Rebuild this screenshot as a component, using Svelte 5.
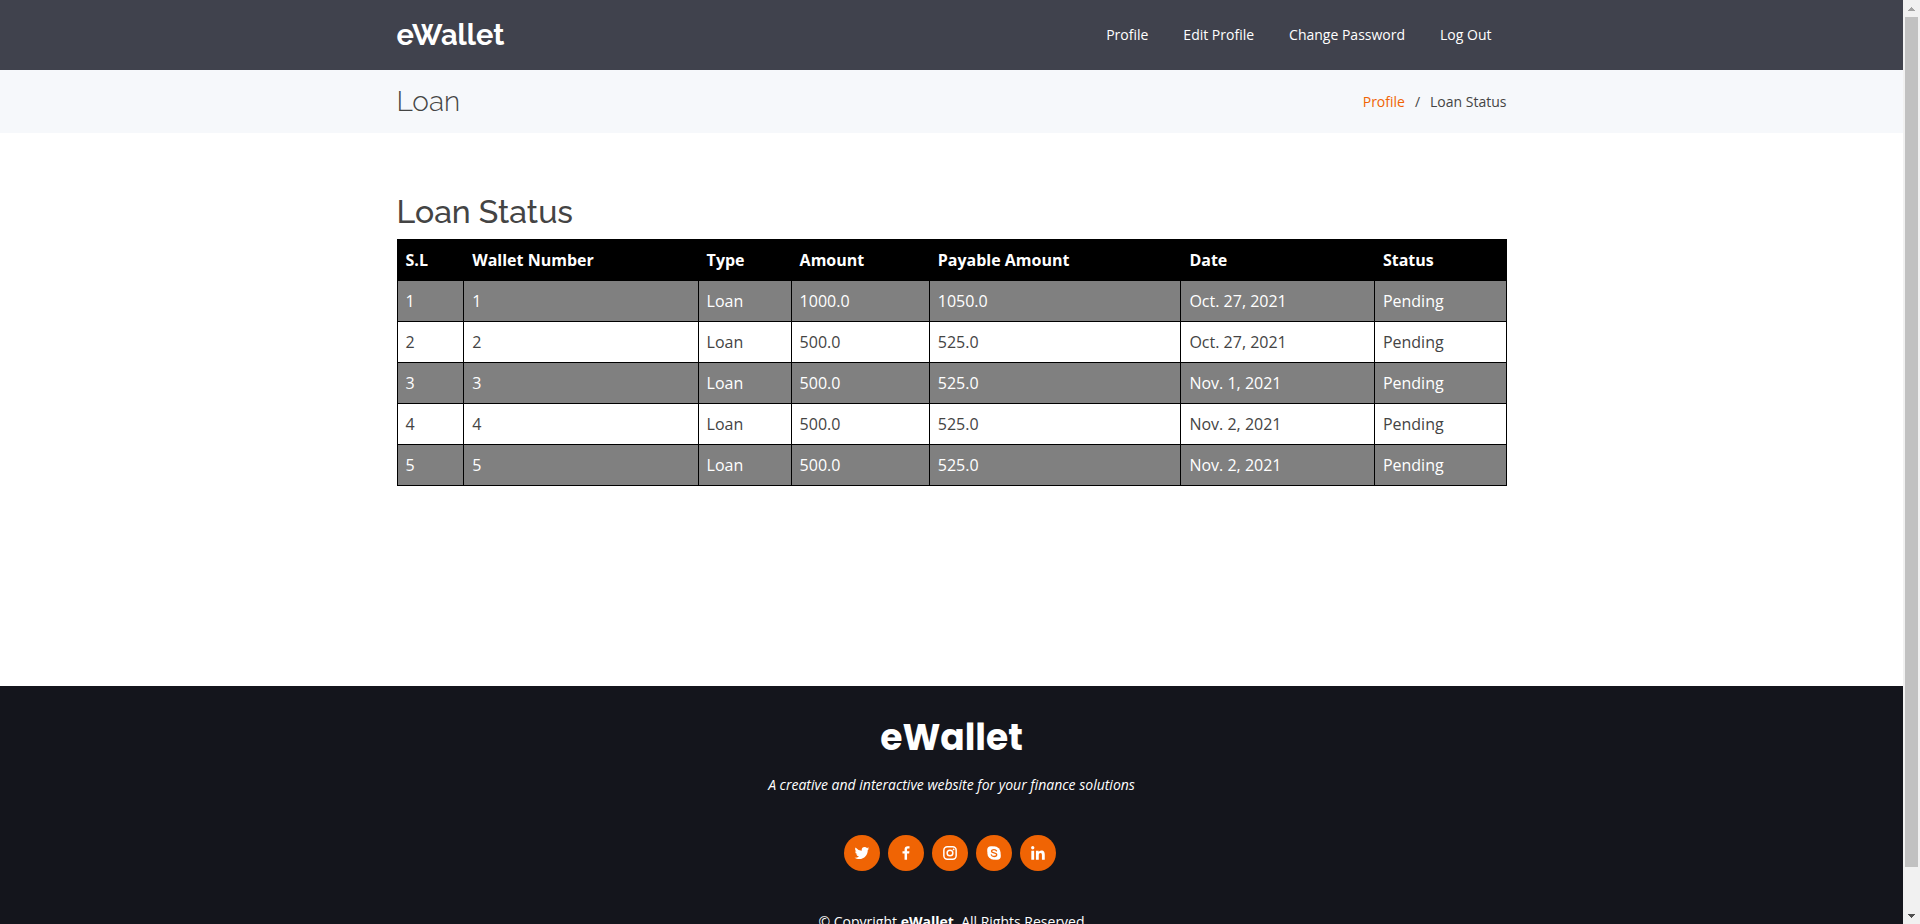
<script>
  const nav = ['Profile', 'Edit Profile', 'Change Password', 'Log Out'];
  const columns = ['S.L', 'Wallet Number', 'Type', 'Amount', 'Payable Amount', 'Date', 'Status'];
  const loans = [
    ['1', '1', 'Loan', '1000.0', '1050.0', 'Oct. 27, 2021', 'Pending'],
    ['2', '2', 'Loan', '500.0', '525.0', 'Oct. 27, 2021', 'Pending'],
    ['3', '3', 'Loan', '500.0', '525.0', 'Nov. 1, 2021', 'Pending'],
    ['4', '4', 'Loan', '500.0', '525.0', 'Nov. 2, 2021', 'Pending'],
    ['5', '5', 'Loan', '500.0', '525.0', 'Nov. 2, 2021', 'Pending']
  ];
</script>

<div class="window">
  <div class="page">
    <header>
      <div class="container bar">
        <a class="logo" href="#home">eWallet</a>
        <nav>
          {#each nav as item}
            <a href="#nav">{item}</a>
          {/each}
        </nav>
      </div>
    </header>

    <main>
      <section class="breadcrumbs">
        <div class="container bar">
          <h2>Loan</h2>
          <ol>
            <li><a href="#profile">Profile</a></li>
            <li>Loan Status</li>
          </ol>
        </div>
      </section>

      <section class="content container">
        <h1>Loan Status</h1>
        <table>
          <thead>
            <tr>
              {#each columns as column}<th scope="col">{column}</th>{/each}
            </tr>
          </thead>
          <tbody>
            {#each loans as loan}
              <tr>
                {#each loan as value}<td>{value}</td>{/each}
              </tr>
            {/each}
          </tbody>
        </table>
      </section>
    </main>

    <footer>
      <h3>eWallet</h3>
      <p>A creative and interactive website for your finance solutions</p>
      <div class="social">
        <a href="#twitter" aria-label="Twitter">
          <svg viewBox="0 0 24 24"><path d="M19.633 7.997c.013.175.013.349.013.523 0 5.325-4.053 11.461-11.46 11.461-2.282 0-4.402-.661-6.186-1.809.324.037.636.05.973.05a8.07 8.07 0 0 0 5.001-1.721 4.036 4.036 0 0 1-3.767-2.793c.249.037.499.062.761.062.361 0 .724-.05 1.061-.137a4.027 4.027 0 0 1-3.23-3.953v-.05c.537.299 1.16.486 1.82.511a4.022 4.022 0 0 1-1.796-3.354c0-.748.199-1.434.548-2.032a11.457 11.457 0 0 0 8.306 4.215c-.062-.3-.1-.611-.1-.923a4.026 4.026 0 0 1 4.028-4.028c1.16 0 2.207.486 2.943 1.272a7.957 7.957 0 0 0 2.556-.973 4.02 4.02 0 0 1-1.771 2.22 8.073 8.073 0 0 0 2.319-.624 8.645 8.645 0 0 1-2.019 2.083z" /></svg>
        </a>
        <a href="#facebook" aria-label="Facebook">
          <svg viewBox="0 0 24 24"><path d="M13.397 20.997v-8.196h2.765l.411-3.209h-3.176V7.548c0-.926.258-1.56 1.587-1.56h1.684V3.127A22.336 22.336 0 0 0 14.201 3c-2.444 0-4.122 1.492-4.122 4.231v2.355H7.332v3.209h2.753v8.202h3.312z" /></svg>
        </a>
        <a href="#instagram" aria-label="Instagram">
          <svg viewBox="0 0 24 24">
            <rect x="3.8" y="3.8" width="16.4" height="16.4" rx="4.6" fill="none" stroke="#fff" stroke-width="2" />
            <circle cx="12" cy="12" r="3.8" fill="none" stroke="#fff" stroke-width="2" />
            <circle cx="16.8" cy="7.2" r="1.2" />
          </svg>
        </a>
        <a href="#skype" aria-label="Skype">
          <svg viewBox="0 0 24 24">
            <circle cx="12" cy="12" r="8.9" />
            <circle cx="8" cy="8" r="5.1" />
            <circle cx="16" cy="16" r="5.1" />
            <path d="M15.3 9.2C14.7 7.9 13.5 7.4 12 7.4c-1.9 0-3.3.8-3.3 2.2 0 1.5 1.5 1.9 3.4 2.3 2 .4 3.5.9 3.500 2.400 0 1.500-1.500 2.400-3.500 2.400-1.800 0-3.200-.7-3.700-2.200" fill="none" stroke="#f06404" stroke-width="1.8" stroke-linecap="round" />
          </svg>
        </a>
        <a href="#linkedin" aria-label="LinkedIn">
          <svg viewBox="0 0 24 24">
            <circle cx="4.983" cy="5.009" r="2.188" />
            <path d="M9.237 8.855v12.139h3.769v-6.003c0-1.584.298-3.118 2.262-3.118 1.937 0 1.961 1.811 1.961 3.218v5.904H21v-6.657c0-3.27-.704-5.783-4.526-5.783-1.835 0-3.065 1.007-3.568 1.96h-.051v-1.66H9.237zm-6.142 0H6.87v12.139H3.095z" />
          </svg>
        </a>
      </div>
      <div class="copyright">© Copyright <strong>eWallet</strong>. All Rights Reserved</div>
    </footer>
  </div>

  <div class="scrollbar" aria-hidden="true">
    <svg viewBox="0 0 17 17"><path d="M5 11h7v-1h-1V9h-1V8H9V7H8v1H7v1H6v1H5z" fill="#a3a3a3" /></svg>
    <div class="track"><div class="thumb"></div></div>
    <svg viewBox="0 0 17 17"><path d="M5 7h7v1h-1v1h-1v1H9v1H8v-1H7V9H6V8H5z" fill="#505050" /></svg>
  </div>
</div>

<style>
  :global(body) {
    margin: 0;
    background: #fff;
  }
  * {
    box-sizing: border-box;
  }
  .window {
    display: grid;
    grid-template-columns: minmax(0, 1fr) 17px;
    height: 100vh;
    font-family: 'Open Sans', sans-serif;
    font-size: 16px;
    line-height: 24px;
    color: #444;
  }
  .page {
    overflow-y: auto;
    scrollbar-width: none;
  }
  .container {
    width: 100%;
    max-width: 1140px;
    margin: 0 auto;
    padding: 0 15px;
  }
  .bar {
    display: flex;
    align-items: center;
    justify-content: space-between;
  }
  a {
    color: #f06404;
    text-decoration: none;
  }
  h1, h2, h3, p, ol {
    margin: 0;
  }
  header {
    padding: 15px 0;
    background: #40424d;
  }
  header .bar {
    min-height: 40px;
  }
  .logo {
    font-family: Raleway, Lato, sans-serif;
    font-size: 29px;
    font-weight: 700;
    line-height: 36px;
    color: #fff;
  }
  nav {
    display: flex;
    gap: 35px;
    padding-right: 15px;
  }
  nav a {
    font-size: 14px;
    font-weight: 500;
    color: #fff;
  }
  .breadcrumbs {
    padding: 15px 0;
    background: #f6f8fb;
  }
  .breadcrumbs h2 {
    font-family: Raleway, Lato, sans-serif;
    font-size: 28px;
    font-weight: 300;
    line-height: 33px;
  }
  ol {
    display: flex;
    padding: 0;
    list-style: none;
    font-size: 14px;
  }
  li + li::before {
    content: '/';
    padding: 0 10px;
  }
  .content {
    padding-top: 60px;
    padding-bottom: 200px;
  }
  h1 {
    margin-bottom: 8px;
    font-family: Raleway, Lato, sans-serif;
    font-size: 32px;
    font-weight: 500;
    line-height: 38px;
  }
  table {
    width: 100%;
    border-collapse: collapse;
  }
  th, td {
    padding: 8px;
    border: 1px solid #000;
    text-align: left;
  }
  th {
    background: #000;
    color: #fff;
    font-weight: 700;
  }
  tbody tr:nth-child(odd) {
    background: #808080;
    color: #fff;
  }
  footer {
    padding: 30px 0;
    background: #14151c;
    color: #fff;
    font-size: 14px;
    line-height: 21px;
    text-align: center;
  }
  h3 {
    margin-bottom: 15px;
    font-family: Poppins, Inter, sans-serif;
    font-size: 36px;
    font-weight: 700;
    line-height: 43px;
  }
  footer p {
    margin-bottom: 40px;
    font-style: italic;
  }
  .social {
    display: flex;
    justify-content: center;
    gap: 8px;
    margin-bottom: 40px;
    padding-right: 4px;
  }
  .social a {
    display: grid;
    place-items: center;
    width: 36px;
    height: 36px;
    padding-bottom: 1px;
    border-radius: 50%;
    background: #f06404;
  }
  .social svg {
    width: 18px;
    height: 18px;
    fill: #fff;
  }
  .scrollbar {
    display: flex;
    flex-direction: column;
    background: #f1f1f1;
  }
  .scrollbar svg {
    display: block;
    width: 17px;
    height: 17px;
  }
  .track {
    flex: 1;
    padding: 0 2px;
  }
  .thumb {
    height: 95.5%;
    background: #c1c1c1;
  }
</style>
